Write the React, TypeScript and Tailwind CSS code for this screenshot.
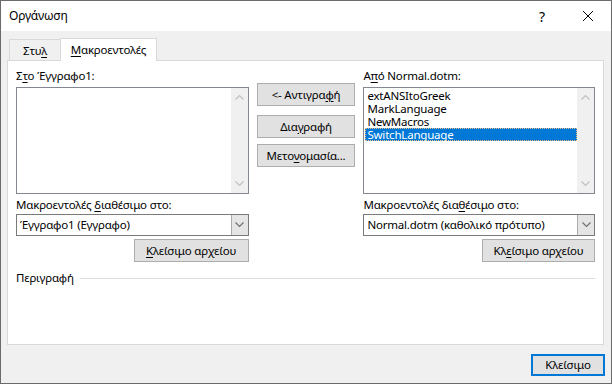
import React from 'react';

// --- small accelerator helper: underlines one letter ---
const Acc: React.FC<{ pre: string; key_: string; post: string }> = ({ pre, key_, post }) => (
  <span>
    {pre}
    <span className="underline underline-offset-2">{key_}</span>
    {post}
  </span>
);

const Chevron: React.FC<{ up?: boolean; color?: string }> = ({ up, color = '#c0c0c0' }) => (
  <svg width="9" height="6" viewBox="0 0 9 6">
    <path d={up ? 'M0.5 5.5 L4.5 1.5 L8.5 5.5' : 'M0.5 0.5 L4.5 4.5 L8.5 0.5'} fill="none" stroke={color} strokeWidth="1.2" />
  </svg>
);

const WinButton: React.FC<{ children: React.ReactNode; className?: string }> = ({ children, className = '' }) => (
  <div className={`h-[23px] flex items-center justify-center bg-[#e1e1e1] border border-[#adadad] text-black ${className}`}>
    {children}
  </div>
);

const ListBox: React.FC<{ items?: string[]; selected?: number }> = ({ items = [], selected }) => (
  <div className="h-[107px] border border-[#828790] bg-white flex">
    <div className="flex-1 pt-[1px] pl-[1px]">
      {items.map((it, i) => (
        <div
          key={it}
          className={
            i === selected
              ? 'h-[13px] leading-[13px] pl-[2px] bg-[#0078d7] text-white outline outline-1 outline-dotted outline-[#f0c080] -outline-offset-1'
              : 'h-[13px] leading-[13px] pl-[2px]'
          }
        >
          {it}
        </div>
      ))}
    </div>
    <div className="w-[17px] bg-[#f0f0f0] flex flex-col items-center justify-between py-[6px]">
      <Chevron up />
      <Chevron />
    </div>
  </div>
);

const Combo: React.FC<{ value: string }> = ({ value }) => (
  <div className="h-[22px] border border-[#7a7a7a] bg-white flex">
    <div className="flex-1 pl-[3px] leading-[20px]">{value}</div>
    <div className="w-[17px] bg-[#e5e5e5] border-l border-[#acacac] flex items-center justify-center">
      <Chevron color="#707070" />
    </div>
  </div>
);

const App: React.FC = () => {
  return (
    <div
      className="w-[612px] h-[384px] border border-[#6b6b6b] bg-[#f0f0f0] flex flex-col text-[11.5px] tracking-[-0.2px] text-black"
      style={{ fontFamily: '"Noto Sans", "Liberation Sans", sans-serif' }}
    >
      {/* TITLE BAR */}
      <div className="h-[30px] bg-white flex items-center shrink-0 text-[12px]">
        <div className="pl-[8px] flex-1">Οργάνωση</div>
        <div className="w-[46px] text-center text-[14px]">?</div>
        <div className="w-[46px] flex justify-center">
          <svg width="10" height="10" viewBox="0 0 10 10">
            <path d="M0 0 L10 10 M10 0 L0 10" stroke="#000" strokeWidth="1" />
          </svg>
        </div>
      </div>

      {/* TABS */}
      <div className="pl-[8px] pt-[7px] flex items-end h-[29px] shrink-0">
        <div className="w-[51px] h-[21px] border border-b-0 border-r-0 border-[#d9d9d9] flex items-center justify-center pt-[2px]">
          <Acc pre="Στυ" key_="λ" post="" />
        </div>
        <div className="w-[97px] h-[23px] border border-b-0 border-[#d9d9d9] bg-white flex items-center justify-center -mb-[1px] relative z-10">
          <Acc pre="" key_="Μ" post="ακροεντολές" />
        </div>
      </div>

      {/* TAB PANEL */}
      <div className="ml-[6px] w-[597px] h-[285px] border border-[#d9d9d9] bg-white px-[8px] pt-[7px] flex flex-col shrink-0">
        <div className="flex">
          {/* left column */}
          <div className="w-[233px] flex flex-col">
            <div className="h-[16px] leading-[16px] mb-[3px]">
              <Acc pre="Σ" key_="τ" post="ο Έγγραφο1:" />
            </div>
            <ListBox />
            <div className="h-[16px] leading-[16px] mt-[3px]">
              <Acc pre="Μακροεντολές " key_="δ" post="ιαθέσιμο στο:" />
            </div>
            <div className="mt-[1px]">
              <Combo value="Έγγραφο1 (Εγγραφο)" />
            </div>
            <div className="mt-[3px] flex justify-end">
              <WinButton className="w-[115px]">
                <Acc pre="" key_="Κ" post="λείσιμο αρχείου" />
              </WinButton>
            </div>
          </div>

          {/* middle buttons */}
          <div className="w-[99px] ml-[8px] pt-[15px] flex flex-col">
            <WinButton>
              <Acc pre="<- Αντιγρα" key_="φ" post="ή" />
            </WinButton>
            <WinButton className="mt-[9px]">
              <Acc pre="Δια" key_="γ" post="ραφή" />
            </WinButton>
            <WinButton className="mt-[6px]">
              <Acc pre="Μετο" key_="ν" post="ομασία..." />
            </WinButton>
          </div>

          {/* right column */}
          <div className="w-[232px] ml-[8px] flex flex-col">
            <div className="h-[16px] leading-[16px] mb-[3px]">
              <Acc pre="Α" key_="π" post="ό Normal.dotm:" />
            </div>
            <ListBox items={['extANSItoGreek', 'MarkLanguage', 'NewMacros', 'SwitchLanguage']} selected={3} />
            <div className="h-[16px] leading-[16px] mt-[3px]">
              <Acc pre="Μακροεντολές δια" key_="θ" post="έσιμο στο:" />
            </div>
            <div className="mt-[1px]">
              <Combo value="Normal.dotm (καθολικό πρότυπο)" />
            </div>
            <div className="mt-[3px] flex justify-end">
              <WinButton className="w-[113px]">
                <Acc pre="Κλ" key_="ε" post="ίσιμο αρχείου" />
              </WinButton>
            </div>
          </div>
        </div>

        {/* description group */}
        <div className="mt-[8px] flex items-center gap-[6px]">
          <span className="leading-[16px]">Περιγραφή</span>
          <div className="flex-1 h-[1px] bg-[#dcdcdc]" />
        </div>
      </div>

      {/* FOOTER */}
      <div className="flex justify-end pr-[6px] pt-[9px]">
        <div className="w-[74px] h-[22px] border-2 border-[#0078d7] bg-[#e1e1e1] flex items-center justify-center">
          Κλείσιμο
        </div>
      </div>
    </div>
  );
};

export default App;
